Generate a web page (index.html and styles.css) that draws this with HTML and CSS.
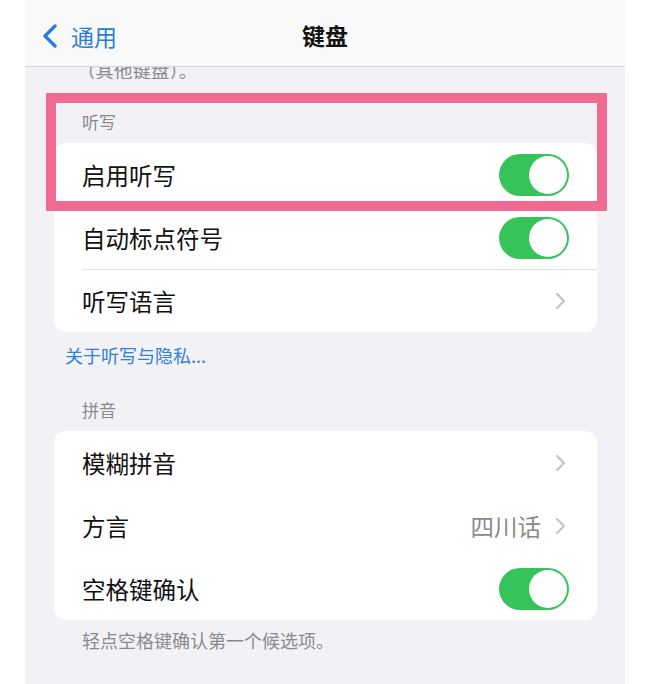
FILE: index.html
```html
<!DOCTYPE html>
<html lang="zh-CN">
<head>
<meta charset="utf-8">
<link rel="stylesheet" href="styles.css">
</head>
<body>
<div class="phone">
  <div class="nav">
    <div class="back">
      <svg class="back-icon" width="16" height="24" viewBox="0 0 16 24"><path d="M13 2 L3 12 L13 22" fill="none" stroke="#2a7ddf" stroke-width="3.4" stroke-linecap="round" stroke-linejoin="round"/></svg>
      <span class="back-text">通用</span>
    </div>
    <div class="title">键盘</div>
  </div>
  <div class="clip"><span class="clip-text">（其他键盘）。</span></div>

  <div class="header first">听写</div>
  <div class="card">
    <div class="row">
      <span class="label">启用听写</span>
      <span class="toggle"><span class="knob"></span></span>
    </div>
    <div class="row">
      <span class="label">自动标点符号</span>
      <span class="toggle"><span class="knob"></span></span>
    </div>
    <div class="row">
      <span class="label">听写语言</span>
      <svg class="chev" width="12" height="18" viewBox="0 0 12 18"><path d="M2 2 L9 9 L2 16" fill="none" stroke="#c4c4c8" stroke-width="2.2" stroke-linecap="round" stroke-linejoin="round"/></svg>
    </div>
  </div>
  <div class="link">关于听写与隐私...</div>

  <div class="header second">拼音</div>
  <div class="card">
    <div class="row nosep">
      <span class="label">模糊拼音</span>
      <svg class="chev" width="12" height="18" viewBox="0 0 12 18"><path d="M2 2 L9 9 L2 16" fill="none" stroke="#c4c4c8" stroke-width="2.2" stroke-linecap="round" stroke-linejoin="round"/></svg>
    </div>
    <div class="row nosep">
      <span class="label">方言</span>
      <span class="value">四川话</span>
      <svg class="chev" width="12" height="18" viewBox="0 0 12 18"><path d="M2 2 L9 9 L2 16" fill="none" stroke="#c4c4c8" stroke-width="2.2" stroke-linecap="round" stroke-linejoin="round"/></svg>
    </div>
    <div class="row nosep">
      <span class="label">空格键确认</span>
      <span class="toggle"><span class="knob"></span></span>
    </div>
  </div>
  <div class="footer">轻点空格键确认第一个候选项。</div>

  <div class="highlight"></div>
</div>
</body>
</html>
```

FILE: styles.css
```css
* { box-sizing: border-box; }
html, body { margin: 0; padding: 0; background: #ffffff; }
body {
  font-family: "Noto Sans CJK SC", "Noto Sans", "Liberation Sans", sans-serif;
  width: 654px;
  height: 684px;
  overflow: hidden;
}
.phone {
  position: relative;
  margin-left: 25px;
  width: 600px;
  height: 684px;
  background: #f2f2f6;
}
.nav {
  position: relative;
  height: 67px;
  background: #f9f9f9;
  border-bottom: 1px solid #d6d6d8;
  display: flex;
  align-items: center;
  justify-content: center;
}
.back {
  position: absolute;
  left: 17px;
  top: 24px;
  display: flex;
  align-items: center;
  gap: 13px;
  color: #2a7ddf;
}
.back-text {
  font-size: 23px;
  line-height: 24px;
}
.title {
  font-size: 23px;
  font-weight: 700;
  color: #111;
  margin-top: 4px;
}
.clip {
  height: 12px;
  overflow: hidden;
  display: flex;
  align-items: flex-end;
  padding-left: 52px;
}
.clip-text {
  font-size: 18.5px;
  line-height: 22px;
  color: #8a8a8e;
  margin-bottom: -2px;
}
.header {
  font-size: 17px;
  line-height: 22px;
  color: #8a8a8e;
  padding-left: 57px;
  margin-bottom: 10px;
}
.header.first { margin-top: 32px; }
.header.second { margin-top: 33px; }
.card {
  margin: 0 28px 0 29px;
  background: #ffffff;
  border-radius: 12px;
  overflow: hidden;
}
.row {
  position: relative;
  height: 63px;
  display: flex;
  align-items: center;
  padding: 0 28px 0 28px;
}
.row + .row::before {
  content: "";
  position: absolute;
  left: 28px;
  right: 0;
  top: 0;
  height: 1px;
  background: #e3e3e6;
}
.row.nosep::before { display: none; }
.label {
  flex: 1;
  font-size: 23.5px;
  color: #111;
  line-height: 30px;
}
.value {
  font-size: 23.5px;
  color: #8a8a8e;
  margin-right: 14px;
}
.chev { margin-right: 2px; }
.toggle {
  position: relative;
  width: 70px;
  height: 42px;
  border-radius: 21px;
  background: #35c35a;
}
.knob {
  position: absolute;
  right: 2px;
  top: 2px;
  width: 38px;
  height: 38px;
  border-radius: 50%;
  background: #ffffff;
}
.link {
  margin-top: 12px;
  padding-left: 40px;
  font-size: 18px;
  line-height: 22px;
  color: #2f80d8;
}
.footer {
  margin-top: 9px;
  padding-left: 57px;
  font-size: 18px;
  line-height: 22px;
  color: #8a8a8e;
}
.highlight {
  position: absolute;
  left: 21px;
  top: 93px;
  width: 561px;
  height: 118px;
  border: 10px solid #f06b92;
}
```
